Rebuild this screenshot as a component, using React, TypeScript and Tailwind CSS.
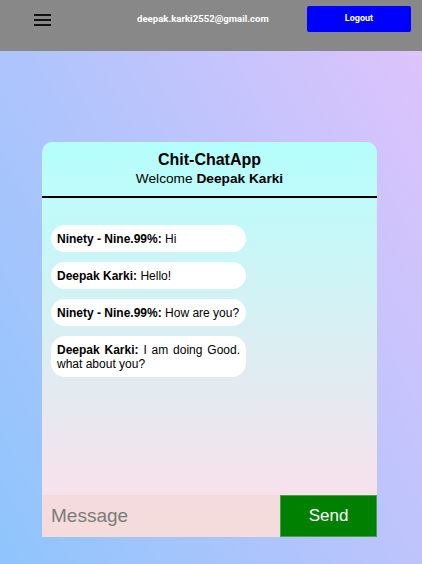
const messages = [
  { id: 1, user: "Ninety - Nine.99%", text: "Hi" },
  { id: 2, user: "Deepak Karki", text: "Hello!" },
  { id: 3, user: "Ninety - Nine.99%", text: "How are you?" },
  { id: 4, user: "Deepak Karki", text: "I am doing Good. what about you?" },
]

export default function App() {
  return (
    <div className="min-h-[564px] flex flex-col bg-[linear-gradient(62deg,#8ec5fc_0%,#e0c3fc_100%)] font-['Liberation_Sans',Arial,sans-serif]">
      {/* navbar */}
      <nav className="h-[51px] bg-[#888888] flex items-start pt-[6px] pl-[34px] pr-[11px] font-['Roboto',Arial,sans-serif]">
        <svg width="17" height="12" viewBox="0 0 17 12" className="mt-[8px]">
          <rect x="0" y="0" width="17" height="2" fill="#111" />
          <rect x="0" y="5" width="17" height="2" fill="#111" />
          <rect x="0" y="10" width="17" height="2" fill="#111" />
        </svg>
        <span className="ml-[86px] mt-[7px] text-white font-bold text-[9.6px] leading-[12px]">
          deepak.karki2552@gmail.com
        </span>
        <button className="ml-auto w-[104px] h-[26px] bg-[#0000ff] rounded-[2px] text-white font-bold text-[9px]">
          Logout
        </button>
      </nav>

      <div className="flex pt-[91px] pl-[42px]">
        <div className="w-[335px] h-[395px] flex flex-col rounded-t-[10px] overflow-hidden bg-[linear-gradient(0deg,#ffdee9_0%,#b5fffc_100%)]">
          <div className="text-center pt-[8px] pb-[9px] border-b-2 border-black">
            <h1 className="font-bold text-[16px] leading-[20px]">Chit-ChatApp</h1>
            <p className="text-[13.7px] leading-[17px]">
              Welcome <b>Deepak Karki</b>
            </p>
          </div>

          <div className="flex-1 flex flex-col gap-[10px] pt-[27px] px-[9px]">
            {messages.map((m) => (
              <div
                key={m.id}
                className="w-[195px] bg-white rounded-[14px] px-[6px] py-[6.5px] text-[12px] leading-[14px] text-justify"
              >
                <b>{m.user}:</b> {m.text}
              </div>
            ))}
          </div>

          <div className="flex h-[42px]">
            <input
              placeholder="Message"
              className="flex-1 min-w-0 bg-[#f5dcdc] px-[9px] text-[19px] outline-none placeholder:text-[#7b7b7b]"
            />
            <button className="w-[97px] bg-[#008000] border border-[#4b9f4b] text-white text-[17px]">Send</button>
          </div>
        </div>
      </div>
    </div>
  )
}
